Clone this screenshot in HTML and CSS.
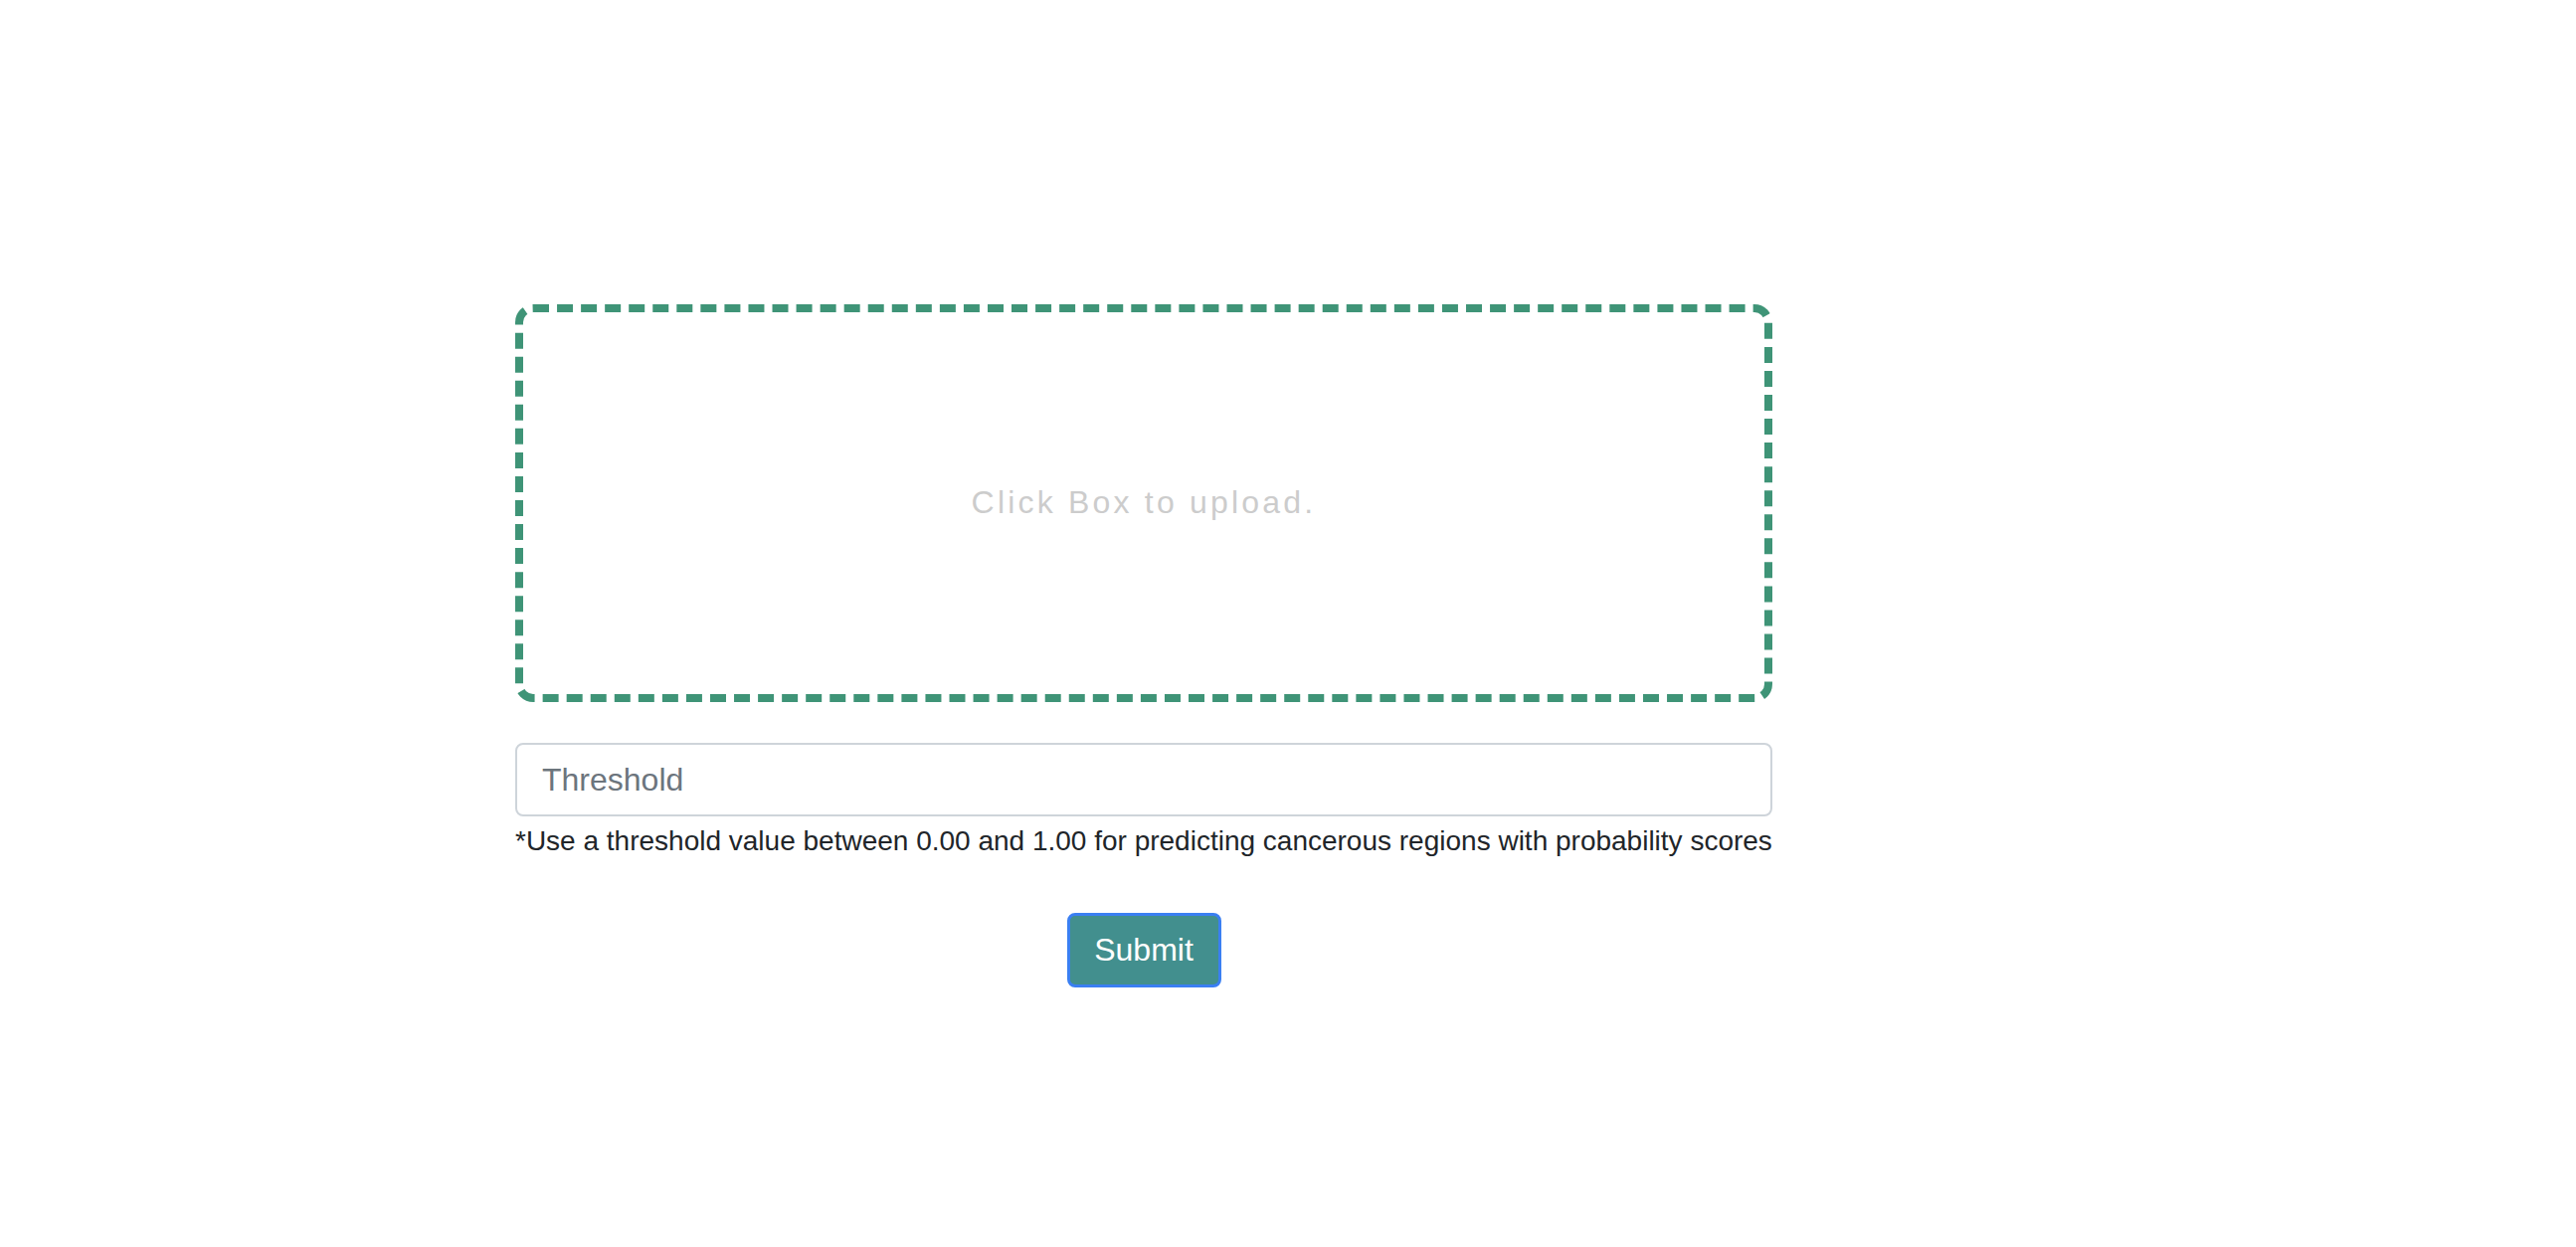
FILE: index.html
```html
<!DOCTYPE html>
<html lang="en">
<head>
<meta charset="utf-8">
<title>Upload</title>
<link rel="stylesheet" href="styles.css">
</head>
<body>
<main class="page">
  <form class="upload-form">
    <label class="dropzone">
      <span class="dropzone-text">Click Box to upload.</span>
    </label>
    <input class="threshold-input" type="text" placeholder="Threshold">
    <p class="form-text">*Use a threshold value between 0.00 and 1.00 for predicting cancerous regions with probability scores</p>
    <div class="actions">
      <button class="submit-btn" type="button">Submit</button>
    </div>
  </form>
</main>
</body>
</html>
```
FILE: styles.css
```css
html, body {
  margin: 0;
  padding: 0;
  background: #ffffff;
}
body {
  font-family: "Liberation Sans", Arial, sans-serif;
  color: #212529;
}
.page {
  padding-top: 306px;
  padding-left: 518px;
}
.upload-form {
  width: 1264px;
  display: flex;
  flex-direction: column;
}
.dropzone {
  box-sizing: border-box;
  height: 400px;
  border: 8px dashed #3f9477;
  border-radius: 18px;
  display: flex;
  align-items: center;
  justify-content: center;
  cursor: pointer;
}
.dropzone-text {
  font-size: 32px;
  letter-spacing: 3.2px;
  color: #cccccc;
  margin-top: -2px;
}
.threshold-input {
  box-sizing: border-box;
  margin-top: 41px;
  height: 74px;
  width: 100%;
  border: 2px solid #ced4da;
  border-radius: 8px;
  padding: 0 25px;
  font-family: "Liberation Sans", Arial, sans-serif;
  font-size: 32px;
  color: #495057;
  outline: none;
}
.threshold-input::placeholder {
  color: #6c757d;
}
.form-text {
  margin: 4px 0 0;
  font-size: 28px;
  line-height: 1.5;
  color: #212529;
  white-space: nowrap;
}
.actions {
  display: flex;
  justify-content: center;
  margin-top: 51px;
}
.submit-btn {
  box-sizing: border-box;
  width: 155px;
  height: 75px;
  background: #428f8e;
  border: 3px solid #3a7ff2;
  border-radius: 8px;
  color: #ffffff;
  font-family: "Liberation Sans", Arial, sans-serif;
  font-size: 32px;
  padding: 0;
  cursor: pointer;
}
```
